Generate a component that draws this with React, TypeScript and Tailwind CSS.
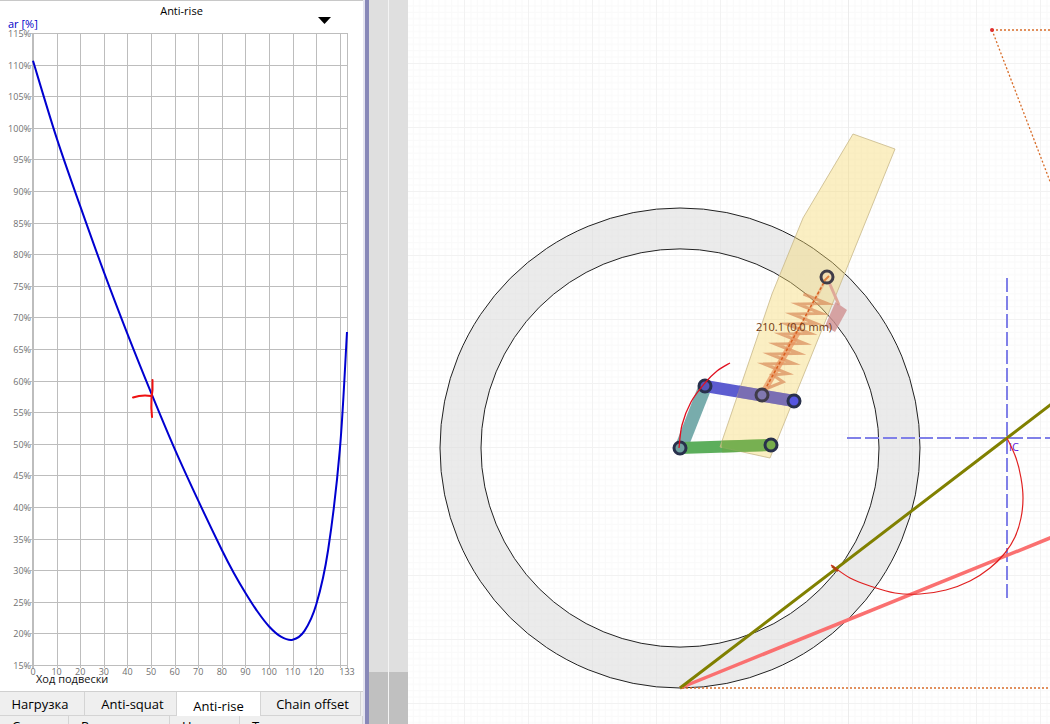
import { useState } from 'react';

type Point = [number, number];

// [travel mm, anti-rise %]
const antiRise: Point[] = [
  [0, 110.6], [10, 98.4], [20, 87.6], [30, 77.2], [40, 67.4], [50, 58.1],
  [60, 49.2], [70, 41], [80, 33.2], [85, 29.6], [90, 26.4], [95, 23.5], [100, 21.1],
  [105, 19.5], [110, 19], [115, 20.4], [120, 24.6], [125, 33.2], [130, 49.2], [133, 67.7],
];

const PLOT = { left: 33, top: 33, width: 314, height: 632 };
const px = (mm: number) => PLOT.left + (mm / 133) * PLOT.width;
const py = (pct: number) => PLOT.top + ((115 - pct) / 100) * PLOT.height;

// smooth path through the points (Catmull-Rom)
function smooth(pts: Point[]) {
  let d = `M${pts[0][0]} ${pts[0][1]}`;
  for (let i = 0; i < pts.length - 1; i++) {
    const p0 = pts[i - 1] || pts[i];
    const p1 = pts[i];
    const p2 = pts[i + 1];
    const p3 = pts[i + 2] || p2;
    d += ` C${p1[0] + (p2[0] - p0[0]) / 6} ${p1[1] + (p2[1] - p0[1]) / 6}`;
    d += ` ${p2[0] - (p3[0] - p1[0]) / 6} ${p2[1] - (p3[1] - p1[1]) / 6} ${p2[0]} ${p2[1]}`;
  }
  return d;
}

const xTicks = Array.from({ length: 14 }, (_, i) => i * 10).concat(133);
const yTicks = Array.from({ length: 21 }, (_, i) => 115 - i * 5);

function Chart() {
  return (
    <svg className="block h-[656px] w-full overflow-visible" role="img" aria-label="Anti-rise">
      <g transform="translate(0 -32)">
        <g stroke="#bdbdbd" shapeRendering="crispEdges">
          {xTicks.map((t) => (
            <line key={t} x1={Math.round(px(t)) + 0.5} x2={Math.round(px(t)) + 0.5} y1={33} y2={668} />
          ))}
          {yTicks.map((t) => (
            <line key={t} x1={30} x2={347} y1={Math.round(py(t)) + 0.5} y2={Math.round(py(t)) + 0.5} />
          ))}
          <line x1={33} x2={33} y1={33} y2={668} strokeWidth={2} />
        </g>
        <g fill="#707070" fontSize="9">
          {yTicks.map((t) => (
            <text key={t} x={31} y={py(t) + 4} textAnchor="end">{t}%</text>
          ))}
          {xTicks.filter((t) => t !== 130).map((t) => (
            <text key={t} x={px(t)} y={675} textAnchor="middle">{t}</text>
          ))}
        </g>
        <text x={36} y={683} fontSize="11" fill="#111">Ход подвески</text>
        <path d={smooth(antiRise.map(([a, b]): Point => [px(a), py(b)]))} fill="none" stroke="#0000d0" strokeWidth={2} />
        <path d="M152.500 380 Q153 390 151.500 398 Q151 408 152 417 M133 397.500 Q142 394.500 151 396" fill="none" stroke="#ee1111" strokeWidth={2} strokeLinecap="round" />
      </g>
    </svg>
  );
}

const icPath: Point[] = [
  [1007, 438], [1016, 458], [1021, 478], [1023, 498], [1021, 518], [1015, 537], [1005, 553],
  [990, 568], [970, 581], [946, 590], [920, 594], [895, 593], [870, 586], [850, 578], [831, 565],
];

const wheelPath: Point[] = [
  [679, 448], [682, 425], [691, 402], [705, 383], [717, 371], [730, 363],
];

// spring coils, alternating left and right tips
const coils = Array.from({ length: 8 }, (_, i) => {
  const dx = i * 5.6;
  const dy = i * 10;
  return `${803.5 - dx},${294 + dy} ${827 - dx},${303.5 + dy}`;
}).join(' ');

const joints: { x: number; y: number; fill: string }[] = [
  { x: 827, y: 277, fill: '#f3dcb0' },
  { x: 705, y: 386, fill: '#5555bb' },
  { x: 762, y: 395, fill: '#8078b0' },
  { x: 794, y: 401, fill: '#5555e0' },
  { x: 680, y: 448, fill: '#6fa0a0' },
  { x: 771, y: 445, fill: '#76ac4c' },
];

function Linkage() {
  return (
    <svg className="block h-full w-full" role="img" aria-label="Suspension linkage">
      <defs>
        <pattern id="minor" x="464" y="63" width="12.8" height="12.8" patternUnits="userSpaceOnUse">
          <path d="M0 0.500H12.800M0.500 0V12.800M0 6.900H12.800M6.900 0V12.800" stroke="#f9f9f9" fill="none" />
        </pattern>
        <pattern id="major" x="464" y="63" width="64" height="64" patternUnits="userSpaceOnUse">
          <path d="M0 0.500H64M0.500 0V64" stroke="#f2f2f2" fill="none" />
        </pattern>
      </defs>
      <g transform="translate(-408 0)">
        <rect x="408" width="100%" height="100%" fill="url(#minor)" />
        <rect x="408" width="100%" height="100%" fill="url(#major)" />
        <path d="M848.500 0V2000" stroke="#ececec" />

        {/* wheel */}
        <path
          d="M440 448a240 240 0 1 0 480 0a240 240 0 1 0 -480 0zM481 448a199 199 0 1 0 398 0a199 199 0 1 0 -398 0z"
          fill="#d8d8d8" fillOpacity="0.5" fillRule="evenodd" stroke="#222"
        />

        {/* links */}
        <path d="M699 384L711 390L688 448L675 446Z" fill="#78acac" />
        <path d="M680 448L771 445" stroke="#5cae5c" strokeWidth="12" />
        <path d="M705 386L794 401" stroke="#5c5cd0" strokeWidth="12" />

        {/* frame */}
        <path d="M853 134L895 149L770 458L720 447L772 294L803 218Z" fill="#f5d870" fillOpacity="0.42" stroke="#c8b888" strokeOpacity="0.8" />
        <path d="M738 391.500L794 401" stroke="#6c60b8" strokeWidth="12" strokeOpacity="0.7" />
        <path d="M722 446.500L771 445" stroke="#68aa48" strokeWidth="12" strokeOpacity="0.7" />

        {/* shock */}
        <path d="M828 280L839 305" stroke="#dfa898" strokeWidth="3" />
        <path d="M835.500 302L847 310L835 332L825 326Z" fill="#d09090" fillOpacity="0.8" />
        <polyline points={`${coils} 773,375 783,382 768,388`} fill="none" stroke="#d88a58" strokeOpacity="0.7" strokeWidth="3" strokeMiterlimit="8" />
        <path d="M764 391L798 332" stroke="#e8925c" strokeOpacity="0.7" strokeWidth="6" />
        <path d="M798 332L827 277" stroke="#e8a070" strokeOpacity="0.5" strokeWidth="3" />
        <path d="M762 395L827 277" stroke="#d86020" strokeWidth="1.500" strokeDasharray="3 2" />

        {joints.map((j) => (
          <circle key={`${j.x}-${j.y}`} cx={j.x} cy={j.y} r="6" fill={j.fill} stroke={j.x === 827 || j.x === 762 ? '#403c48' : '#28304c'} strokeWidth="3" />
        ))}
        <path d="M824 281L829 276" stroke="#e08040" strokeWidth="2" />
        <text x="756" y="331" fontSize="11" fill="#703810">210.1 (0.0 mm)</text>

        {/* instant centre */}
        <path d="M847 438H2400M1007 278V598" stroke="#8080e8" strokeWidth="2" strokeDasharray="14 4" />
        <text x="1009" y="451" fontSize="11" fill="#6020e0">IC</text>

        {/* lines of force */}
        <path d="M680 688L1790 238" stroke="#fa7070" strokeWidth="3.500" />
        <path d="M680 688L1007 438L1530 38" fill="none" stroke="#808000" strokeWidth="3" />
        <path d="M682 688H2400M992 30H2400M992 30L1176 510" fill="none" stroke="#d86c28" strokeWidth="1.300" strokeDasharray="2 2" />
        <circle cx="992" cy="30" r="2" fill="#e03030" />

        <path d={smooth(icPath)} fill="none" stroke="#e02020" strokeWidth="1.200" />
        <path d={smooth(wheelPath)} fill="none" stroke="#e01020" strokeWidth="1.300" />
        <path d="M832 566L838 571" stroke="#b04010" strokeWidth="2.500" />
      </g>
    </svg>
  );
}

const tabs = [
  { name: 'Нагрузка', className: 'w-[85px] pr-1' },
  { name: 'Anti-squat', className: 'w-[92px] pl-1' },
  { name: 'Anti-rise', className: 'w-[84px]' },
  { name: 'Chain offset', className: 'w-[100px] pl-1' },
];

const lowerTabs = [
  { name: 'Седло', className: 'w-[69px]' },
  { name: 'Рычаги', className: 'w-[101px]' },
  { name: 'Наклон', className: 'w-[70px]' },
  { name: 'Трасса', className: 'flex-1' },
];

export default function App() {
  const [active, setActive] = useState('Anti-rise');

  return (
    <div className="flex h-screen overflow-hidden bg-white font-['Open_Sans','Noto_Sans',sans-serif] text-black">
      <section className="flex w-[365px] shrink-0 flex-col border-r-2 border-[#e4e4f0]">
        <header className="grid h-8 grid-cols-[1fr_auto_1fr] border-t border-[#c8c8c8] text-[11px]">
          <span className="self-end pl-2 leading-4 text-[#0000c8]">ar [%]</span>
          <h1 className="pt-0.5 leading-4">Anti-rise</h1>
          <button type="button" aria-label="Выбрать график" className="mr-8 self-end justify-self-end pb-2">
            <svg width="13" height="7" viewBox="0 0 13 7"><path d="M0 0H13L6.500 7Z" /></svg>
          </button>
        </header>
        <Chart />
        <div className="flex-1" />
        <nav role="tablist" className="flex h-[25px] shrink-0 border-t border-[#d0d0d0] bg-[#efefef] text-[13px]">
          {tabs.map((tab) => (
            <button
              key={tab.name}
              type="button"
              role="tab"
              aria-selected={active === tab.name}
              onClick={() => setActive(tab.name)}
              className={`${tab.className} whitespace-nowrap border-r border-[#d4d4d4] leading-5 ${active === tab.name ? 'bg-white pt-1' : 'border-b'}`}
            >
              {tab.name}
            </button>
          ))}
        </nav>
        <nav className="flex h-2 shrink-0 items-start overflow-hidden bg-[#efefef] text-[13px]">
          {lowerTabs.map((tab) => (
            <button key={tab.name} type="button" className={`${tab.className} border-r border-[#d4d4d4] pl-3 text-left leading-5`}>
              {tab.name}
            </button>
          ))}
        </nav>
      </section>
      <div className="w-1 shrink-0 bg-[#8888b8]" />
      <div className="flex w-[39px] shrink-0 gap-px bg-[#f4f4f4]">
        <div className="flex flex-1 flex-col justify-end bg-[#dfdfdf]">
          <div className="h-[52px] bg-[#c0c0c0]" />
        </div>
        <div className="flex flex-1 flex-col justify-end bg-[#dfdfdf]">
          <div className="h-[52px] bg-[#c0c0c0]" />
        </div>
      </div>
      <main className="min-w-0 flex-1 bg-white">
        <Linkage />
      </main>
    </div>
  );
}
